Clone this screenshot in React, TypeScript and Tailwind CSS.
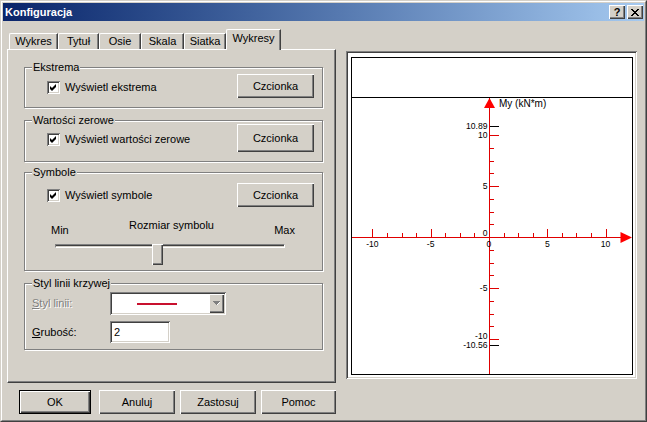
import React from "react";

const raised =
  "bg-[#d4d0c8] shadow-[inset_1px_1px_0_#fff,inset_-1px_-1px_0_#404040,inset_-2px_-2px_0_#808080]";
const sunken =
  "shadow-[inset_1px_1px_0_#808080,inset_-1px_-1px_0_#fff,inset_2px_2px_0_#404040,inset_-2px_-2px_0_#d4d0c8]";

const CheckBox: React.FC = () => (
  <span className={`w-[13px] h-[13px] bg-white ${sunken} flex items-center justify-center shrink-0`}>
    <svg width="7" height="7" viewBox="0 0 7 7">
      <polygon points="0,2 2,4 6,0 6,3 2,7 0,5" fill="#000" />
    </svg>
  </span>
);

const Group: React.FC<{ label: string; className?: string; children?: React.ReactNode }> = ({
  label,
  className = "",
  children,
}) => (
  <div
    className={`relative w-[299px] border border-[#808080] shadow-[inset_1px_1px_0_#fff,1px_1px_0_#fff] ${className}`}
  >
    <span className="absolute left-[7px] -top-[8px] px-[1px] bg-[#d4d0c8] leading-[14px] whitespace-nowrap">
      {label}
    </span>
    {children}
  </div>
);

const Btn: React.FC<{ label: string; className?: string }> = ({ label, className = "" }) => (
  <button className={`${raised} flex items-center justify-center shrink-0 ${className}`}>{label}</button>
);

// chart scale
const X = (v: number) => 137 + v * 11.66;
const Y = (v: number) => 139 - v * 10.2;
const px = (n: number) => Math.round(n) + 0.5;
const minors = [-8.75, -7.5, -6.25, -3.75, -2.5, -1.25, 1.25, 2.5, 3.75, 6.25, 7.5, 8.75];
const majors = [-10, -5, 5, 10];

const Chart: React.FC = () => (
  <svg width="280" height="276" viewBox="0 0 280 276" shapeRendering="crispEdges">
    {/* x axis */}
    <line x1="0" y1="139.5" x2="270" y2="139.5" stroke="#e00000" />
    {[-10, -5, 0, 5, 10].map((v) => (
      <line key={"xm" + v} x1={px(X(v))} y1="131" x2={px(X(v))} y2="139" stroke="#e00000" />
    ))}
    {minors.map((v) => (
      <line key={"xn" + v} x1={px(X(v))} y1="135" x2={px(X(v))} y2="139" stroke="#e00000" />
    ))}
    {/* y axis */}
    <line x1="137.5" y1="0" x2="137.5" y2="276" stroke="#e00000" />
    {majors.map((v) => (
      <line key={"ym" + v} x1="138" y1={px(Y(v))} x2="147" y2={px(Y(v))} stroke="#e00000" />
    ))}
    {minors.map((v) => (
      <line key={"yn" + v} x1="138" y1={px(Y(v))} x2="142" y2={px(Y(v))} stroke="#e00000" />
    ))}
    <line x1="138" y1={px(Y(10.89))} x2="147" y2={px(Y(10.89))} stroke="#000" />
    <line x1="138" y1={px(Y(-10.56))} x2="147" y2={px(Y(-10.56))} stroke="#000" />
    {/* arrows */}
    <polygon points="137.5,0 132,10 143,10" fill="#ff0000" shapeRendering="auto" />
    <polygon points="280,139.5 268.5,134 268.5,145" fill="#ff0000" shapeRendering="auto" />

    <g fontFamily="'Liberation Sans', Arial, sans-serif" fontSize="8.6" fill="#000">
      <text x="147" y="9" fontSize="10">My (kN*m)</text>
      <text x="135.5" y="30.5" textAnchor="end">10.89</text>
      <text x="135.5" y="40" textAnchor="end">10</text>
      <text x="135.5" y="91" textAnchor="end">5</text>
      <text x="135.5" y="138" textAnchor="end">0</text>
      <text x="135.5" y="193" textAnchor="end">-5</text>
      <text x="135.5" y="241" textAnchor="end">-10</text>
      <text x="135.5" y="250" textAnchor="end">-10.56</text>
      {[-10, -5, 0, 5, 10].map((v) => (
        <text key={"xl" + v} x={X(v)} y="148.5" textAnchor="middle">
          {v}
        </text>
      ))}
    </g>
  </svg>
);

export default function App() {
  return (
    <div
      className="w-[647px] h-[422px] bg-[#d4d0c8] border border-t-[#d4d0c8] border-l-[#d4d0c8] border-r-[#404040] border-b-[#404040] text-[11px] text-black"
      style={{ fontFamily: "'Liberation Sans', Arial, sans-serif" }}
    >
      <div className="w-full h-full border border-t-white border-l-white border-r-[#808080] border-b-[#808080] p-[1px] flex flex-col">
        {/* Title bar */}
        <div className="h-[18px] shrink-0 bg-linear-to-r from-[#0a246a] to-[#a6caf0] flex items-center justify-between pl-[2px] pr-[1px]">
          <span className="text-white font-bold text-[11px] leading-none">Konfiguracja</span>
          <div className="flex gap-[2px]">
            <span className={`${raised} w-[16px] h-[14px] flex items-center justify-center font-bold text-[11px] leading-none`}>
              ?
            </span>
            <span className={`${raised} w-[16px] h-[14px] flex items-center justify-center`}>
              <svg width="8" height="7" viewBox="0 0 8 7" shapeRendering="crispEdges">
                <path d="M0 0h2v1h-2zM6 0h2v1h-2zM1 1h2v1h-2zM5 1h2v1h-2zM2 2h4v1h-4zM3 3h2v1h-2zM2 4h4v1h-4zM1 5h2v1h-2zM5 5h2v1h-2zM0 6h2v1h-2zM6 6h2v1h-2z" fill="#000" />
              </svg>
            </span>
          </div>
        </div>

        {/* Body */}
        <div className="flex items-start pl-[4px] pt-[8px]">
          {/* Left column */}
          <div className="w-[329px] flex flex-col">
            {/* Tabs */}
            <div className="h-[20px] flex items-end pl-[2px]">
              {[
                ["Wykres", "w-[49px]"],
                ["Tytuł", "w-[41px]"],
                ["Osie", "w-[42px]"],
                ["Skala", "w-[43px]"],
                ["Siatka", "w-[42px]"],
              ].map(([t, w]) => (
                <div
                  key={t}
                  className={`${w} h-[16px] rounded-tl-[2px] border-t border-l border-white border-r border-r-[#404040] shadow-[inset_-1px_0_0_#808080] flex items-center justify-center leading-none`}
                >
                  {t}
                </div>
              ))}
              <div className="relative z-10 w-[55px] h-[21px] -mb-[1px] bg-[#d4d0c8] rounded-tl-[2px] border-t border-l border-white border-r border-r-[#404040] shadow-[inset_-1px_0_0_#808080] flex items-start justify-center pt-[3px] leading-none">
                Wykresy
              </div>
            </div>

            {/* Tab panel */}
            <div className="h-[334px] border border-t-white border-l-white border-r-[#404040] border-b-[#404040] shadow-[inset_-1px_-1px_0_#808080] pl-[16px] pt-[17px]">
              <Group label="Ekstrema" className="h-[41px]">
                <div className="flex items-center justify-between pl-[22px] pr-[8px] pt-[6px]">
                  <div className="flex items-center gap-[5px] mt-[3px]">
                    <CheckBox />
                    <span>Wyświetl ekstrema</span>
                  </div>
                  <Btn label="Czcionka" className="w-[77px] h-[24px]" />
                </div>
              </Group>

              <Group label="Wartości zerowe" className="h-[42px] mt-[12px]">
                <div className="flex items-center justify-between pl-[22px] pr-[8px] pt-[3px]">
                  <div className="flex items-center gap-[5px] mt-[2px]">
                    <CheckBox />
                    <span>Wyświetl wartości zerowe</span>
                  </div>
                  <Btn label="Czcionka" className="w-[77px] h-[28px]" />
                </div>
              </Group>

              <Group label="Symbole" className="h-[99px] mt-[10px]">
                <div className="flex items-center justify-between pl-[22px] pr-[8px] pt-[10px]">
                  <div className="flex items-center gap-[5px] mt-[1px]">
                    <CheckBox />
                    <span>Wyświetl symbole</span>
                  </div>
                  <Btn label="Czcionka" className="w-[77px] h-[24px]" />
                </div>
                <div className="flex items-start justify-between pl-[26px] pr-[27px] mt-[11px] leading-[14px]">
                  <span className="mt-[5px]">Min</span>
                  <span>Rozmiar symbolu</span>
                  <span className="mt-[5px]">Max</span>
                </div>
                <div className="relative ml-[30px] w-[230px] h-[21px] mt-[4px]">
                  <div className="mt-[7px] h-[4px] border-t border-l border-[#808080] border-b border-r border-b-white border-r-white bg-[#404040] shadow-[inset_0_-1px_0_#d4d0c8]" />
                  <div className={`absolute left-[97px] top-0 w-[11px] h-[21px] ${raised}`} />
                </div>
              </Group>

              <Group label="Styl linii krzywej" className="h-[67px] mt-[12px]">
                <div className="flex flex-col pt-[8px]">
                  <div className="flex items-center h-[23px]">
                    <span className="w-[85px] pl-[7px] text-[#808080] [text-shadow:1px_1px_0_#fff]">
                      <span className="underline">S</span>tyl linii:
                    </span>
                    <div className={`w-[116px] h-[23px] bg-white ${sunken} flex items-center pl-[27px] pr-[2px]`}>
                      <div className="w-[40px] h-[2px] bg-[#c8102e]" />
                      <div className={`ml-auto w-[15px] h-[19px] ${raised} flex items-center justify-center`}>
                        <svg width="8" height="5" viewBox="0 0 8 5" shapeRendering="crispEdges">
                          <path d="M1 1h6v1h-6zM2 2h4v1h-4zM3 3h2v1h-2z" fill="#fff" />
                          <path d="M0 0h7v1h-7zM1 1h5v1h-5zM2 2h3v1h-3zM3 3h1v1h-1z" fill="#808080" />
                        </svg>
                      </div>
                    </div>
                  </div>
                  <div className="flex items-center h-[22px] mt-[6px]">
                    <span className="w-[85px] pl-[7px]">
                      <span className="underline">G</span>rubość:
                    </span>
                    <div className={`w-[60px] h-[22px] bg-white ${sunken} flex items-center pl-[4px]`}>2</div>
                  </div>
                </div>
              </Group>
            </div>

            {/* Dialog buttons */}
            <div className="flex mt-[7px] pl-[12px]">
              <button className="w-[73px] h-[24px] border border-black bg-[#d4d0c8] shadow-[inset_1px_1px_0_#fff,inset_-1px_-1px_0_#404040,inset_-2px_-2px_0_#808080] flex items-center justify-center">
                OK
              </button>
              <Btn label="Anuluj" className="w-[76px] h-[24px] ml-[8px]" />
              <Btn label="Zastosuj" className="w-[76px] h-[24px] ml-[5px]" />
              <Btn label="Pomoc" className="w-[75px] h-[24px] ml-[5px]" />
            </div>
          </div>

          {/* Chart preview */}
          <div className={`w-[291px] h-[328px] mt-[22px] ml-[10px] bg-white ${sunken} pl-[5px] pt-[6px] pr-[4px] pb-[4px] flex`}>
            <div className="flex-1 border border-black flex flex-col">
              <div className="h-[40px] border-b border-black shrink-0" />
              <Chart />
            </div>
          </div>
        </div>
      </div>
    </div>
  );
}
